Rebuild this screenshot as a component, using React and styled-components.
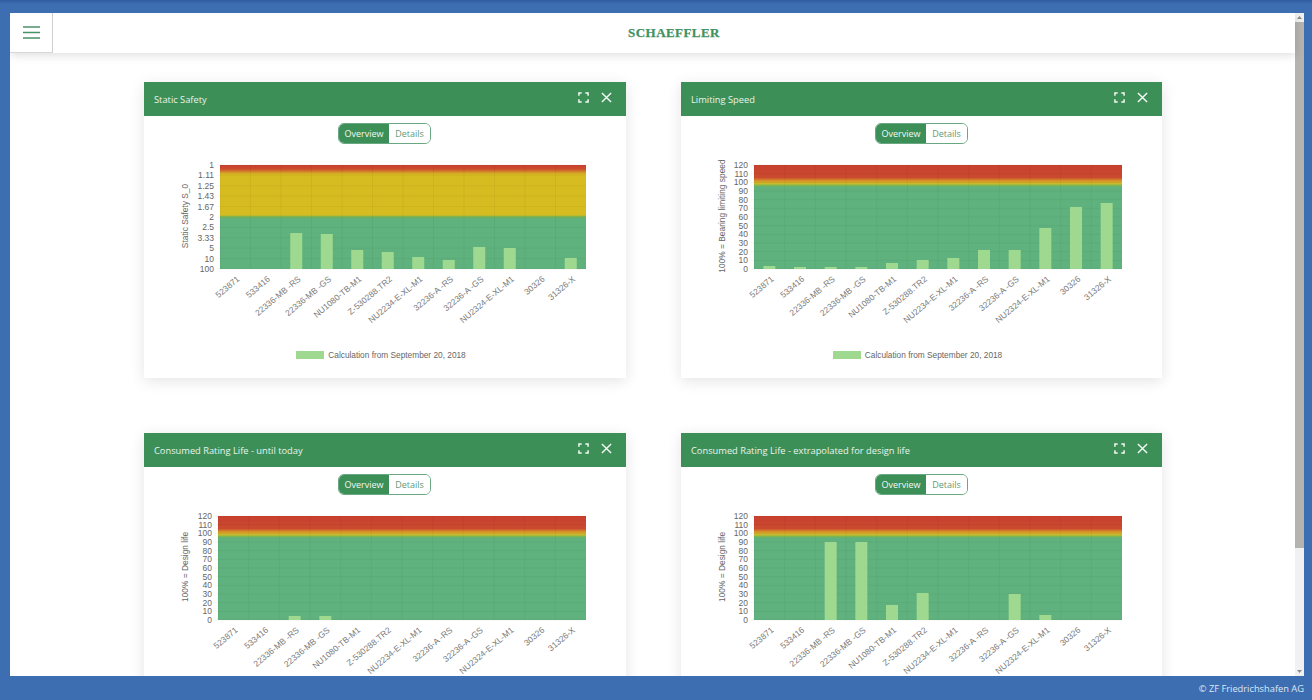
import React from "react";
import styled, { createGlobalStyle } from "styled-components";

const labels = [
  "523871",
  "533416",
  "22336-MB -RS",
  "22336-MB -GS",
  "NU1080-TB-M1",
  "Z-530288.TR2",
  "NU2234-E-XL-M1",
  "32236-A -RS",
  "32236-A -GS",
  "NU2324-E-XL-M1",
  "30326",
  "31326-X",
];

const percentTicks = ["120", "110", "100", "90", "80", "70", "60", "50", "40", "30", "20", "10", "0"];
const safetyTicks = ["1", "1.11", "1.25", "1.43", "1.67", "2", "2.5", "3.33", "5", "10", "100"];

const charts = [
  {
    id: "static",
    title: "Static Safety",
    axis: "Static Safety S_0",
    ticks: safetyTicks,
    left: 76,
    width: 366,
    zones: "safety",
    bars: [0, 0, 36, 35, 19, 17, 12, 9, 22, 21, 0, 11],
    legend: true,
  },
  {
    id: "speed",
    title: "Limiting Speed",
    axis: "100% = Bearing limiting speed",
    ticks: percentTicks,
    left: 73,
    width: 368,
    zones: "percent",
    bars: [3, 2, 2, 2, 6, 9, 11, 19, 19, 41, 62, 66],
    legend: true,
  },
  {
    id: "today",
    title: "Consumed Rating Life - until today",
    axis: "100% = Design life",
    ticks: percentTicks,
    left: 74,
    width: 368,
    zones: "percent",
    bars: [0, 0, 4, 4, 0, 0, 0, 0, 0, 0, 0, 0],
  },
  {
    id: "design",
    title: "Consumed Rating Life - extrapolated for design life",
    axis: "100% = Design life",
    ticks: percentTicks,
    left: 73,
    width: 368,
    zones: "percent",
    bars: [0, 0, 78, 78, 15, 27, 0, 0, 26, 5, 0, 0],
  },
];

const zoneStops = {
  safety: [
    [0, "#c8402f"],
    [0.04, "#cd4e2c"],
    [0.08, "#d4a826"],
    [0.1, "#d6bc20"],
    [0.48, "#d6bc20"],
    [0.5, "#72b45a"],
    [0.52, "#5fb27e"],
    [1, "#5fb27e"],
  ],
  percent: [
    [0, "#c8402f"],
    [0.12, "#ca4a2f"],
    [0.155, "#d89a28"],
    [0.18, "#c9bc2a"],
    [0.2, "#72b45a"],
    [0.215, "#5fb27e"],
    [1, "#5fb27e"],
  ],
};

const GlobalStyle = createGlobalStyle`
  html, body {
    margin: 0;
    padding: 0;
    height: 100%;
    overflow: hidden;
  }
  body {
    font-family: "Open Sans", "Liberation Sans", sans-serif;
  }
`;

const Page = styled.div`
  height: 700px;
  display: flex;
  flex-direction: column;
  background: linear-gradient(#2f5c9e 0, #3d6eb2 4px);
  padding: 13px 8px 0 10px;
  box-sizing: border-box;
`;

const Frame = styled.div`
  height: 663px;
  display: flex;
  background: #fff;
  overflow: hidden;
`;

const Main = styled.main`
  flex: 1;
  min-width: 0;
  display: flex;
  flex-direction: column;
`;

const Header = styled.header`
  height: 40px;
  flex: none;
  display: flex;
  background: #fff;
  box-shadow: 0 2px 9px rgba(0, 0, 0, 0.14);
  z-index: 1;
`;

const MenuButton = styled.button`
  width: 43px;
  padding: 0;
  display: flex;
  align-items: center;
  justify-content: center;
  background: #fff;
  border: 0;
  border-right: 1px solid #cfcfcf;
  border-bottom: 1px solid #d8d8d8;
`;

const Brand = styled.div`
  flex: 1;
  display: flex;
  align-items: center;
  justify-content: center;
  color: #3f9161;
  font-family: "Liberation Serif", serif;
  font-weight: 700;
  font-size: 13px;
  letter-spacing: 0.45px;
  -webkit-text-stroke: 0.25px #3f9161;
`;

const Grid = styled.div`
  display: grid;
  grid-template-columns: 482px 481px;
  column-gap: 55px;
  row-gap: 55px;
  padding: 29px 0 0 134px;
`;

const Card = styled.section`
  height: 296px;
  background: #fff;
  box-shadow: 0 3px 14px rgba(0, 0, 0, 0.11);
`;

const CardHeader = styled.div`
  height: 34px;
  display: flex;
  align-items: center;
  padding: 0 14px 0 10px;
  background: #3d8f58;
  color: #e9f4ec;
`;

const CardTitle = styled.h2`
  flex: 1;
  margin: 1px 0 0;
  font-size: 9.3px;
  font-weight: 400;
`;

const IconButton = styled.span`
  display: flex;
  margin-left: ${({ $gap }) => $gap}px;
  margin-top: -3px;
`;

const CardBody = styled.div`
  padding-top: 7px;
`;

const Toggle = styled.div`
  width: 93px;
  height: 21px;
  margin-left: 194px;
  display: flex;
  box-sizing: border-box;
  border: 1px solid #6aa883;
  border-radius: 6px;
  overflow: hidden;
  font-size: 9px;
`;

const ToggleItem = styled.div`
  display: flex;
  align-items: center;
  justify-content: center;
  flex: ${({ $active }) => ($active ? "0 0 50px" : "1")};
  background: ${({ $active }) => ($active ? "#3d8f58" : "#fff")};
  color: ${({ $active }) => ($active ? "#f2f8f4" : "#5f9a75")};
  font-weight: 400;
`;

const ChartSvg = styled.svg`
  display: block;
  margin-top: 6px;
`;

const Legend = styled.div`
  display: flex;
  align-items: center;
  justify-content: center;
  gap: 4px;
  margin-top: 10px;
  padding-right: 8px;
  color: #666;
  font-family: "Liberation Sans", Arial, sans-serif;
  font-size: 8.3px;
`;

const LegendSwatch = styled.span`
  width: 28px;
  height: 8px;
  background: #9fd98f;
`;

const Scrollbar = styled.div`
  flex: none;
  width: 9px;
  display: flex;
  flex-direction: column;
  align-items: center;
  background: #f1f1f1;
`;

const ScrollArrow = styled.span`
  flex: none;
  height: 9px;
  display: flex;
  align-items: center;
  justify-content: center;
`;

const ScrollThumb = styled.div`
  width: 100%;
  height: 526px;
  background: #b5b3af;
`;

const ScrollGap = styled.div`
  flex: 1;
`;

const Footer = styled.footer`
  flex: 1;
  display: flex;
  align-items: center;
  justify-content: flex-end;
  color: #dfe8f4;
  font-size: 9.3px;
`;

function ExpandIcon() {
  return (
    <svg width="11" height="11" viewBox="0 0 12 12" fill="none" stroke="#f2f8f4" strokeWidth="1.6">
      <path d="M1 4V1h3M8 1h3v3M11 8v3H8M4 11H1V8" />
    </svg>
  );
}

function CloseIcon() {
  return (
    <svg width="11" height="11" viewBox="0 0 12 12" fill="none" stroke="#f2f8f4" strokeWidth="1.6">
      <path d="M1 1l10 10M11 1L1 11" />
    </svg>
  );
}

function Chart({ id, axis, ticks, left, width, zones, bars }) {
  const top = 15;
  const height = 104;
  const step = width / labels.length;
  const tickStep = height / (ticks.length - 1);

  return (
    <ChartSvg width="482" height="190" fontFamily="'Liberation Sans', Arial, sans-serif" fontSize="8.5" fill="#666">
      <defs>
        <linearGradient id={id} x1="0" y1="0" x2="0" y2="1">
          {zoneStops[zones].map(([offset, color]) => (
            <stop key={offset} offset={offset} stopColor={color} />
          ))}
        </linearGradient>
      </defs>
      <text transform={`translate(44 ${top + 51}) rotate(-90)`} textAnchor="middle" fontSize="8.4">
        {axis}
      </text>
      <rect x={left} y={top} width={width} height={height} fill={`url(#${id})`} />
      {ticks.map((tick, i) => (
        <g key={tick}>
          <line
            x1={left - 3}
            x2={left + width}
            y1={top + i * tickStep}
            y2={top + i * tickStep}
            stroke="#000"
            strokeOpacity="0.04"
          />
          <text x={left - 6} y={top + i * tickStep + 3} textAnchor="end">
            {tick}
          </text>
        </g>
      ))}
      {labels.map((label, i) => (
        <g key={label}>
          <line
            x1={left + i * step}
            x2={left + i * step}
            y1={top}
            y2={top + height}
            stroke="#000"
            strokeOpacity="0.04"
          />
          {bars[i] > 0 && (
            <rect
              x={left + (i + 0.5) * step - 6}
              y={top + height - bars[i]}
              width="12"
              height={bars[i]}
              fill="#9fd98f"
            />
          )}
          <text
            transform={`translate(${left + (i + 0.5) * step + 5} ${top + height + 11}) rotate(-40)`}
            textAnchor="end"
            fontSize="8.5"
            fill="#777"
          >
            {label}
          </text>
        </g>
      ))}
    </ChartSvg>
  );
}

function ChartCard({ chart }) {
  return (
    <Card>
      <CardHeader>
        <CardTitle>{chart.title}</CardTitle>
        <IconButton>
          <ExpandIcon />
        </IconButton>
        <IconButton $gap={12}>
          <CloseIcon />
        </IconButton>
      </CardHeader>
      <CardBody>
        <Toggle>
          <ToggleItem $active>Overview</ToggleItem>
          <ToggleItem>Details</ToggleItem>
        </Toggle>
        <Chart {...chart} />
        {chart.legend && (
          <Legend>
            <LegendSwatch />
            Calculation from September 20, 2018
          </Legend>
        )}
      </CardBody>
    </Card>
  );
}

export default function App() {
  return (
    <Page>
      <GlobalStyle />
      <Frame>
        <Main>
          <Header>
            <MenuButton aria-label="Menu">
              <svg width="17" height="13" viewBox="0 0 17 13" stroke="#4a9068" strokeWidth="1.5">
                <path d="M0 1h17M0 6.5h17M0 12h17" />
              </svg>
            </MenuButton>
            <Brand>SCHAEFFLER</Brand>
          </Header>
          <Grid>
            {charts.map((chart) => (
              <ChartCard key={chart.id} chart={chart} />
            ))}
          </Grid>
        </Main>
        <Scrollbar>
          <ScrollArrow>
            <svg width="5" height="3" viewBox="0 0 5 3" fill="#8a8a8a">
              <path d="M2.5 0L5 3H0z" />
            </svg>
          </ScrollArrow>
          <ScrollThumb />
          <ScrollGap />
          <ScrollArrow>
            <svg width="5" height="3" viewBox="0 0 5 3" fill="#8a8a8a">
              <path d="M0 0h5L2.5 3z" />
            </svg>
          </ScrollArrow>
        </Scrollbar>
      </Frame>
      <Footer>© ZF Friedrichshafen AG</Footer>
    </Page>
  );
}
